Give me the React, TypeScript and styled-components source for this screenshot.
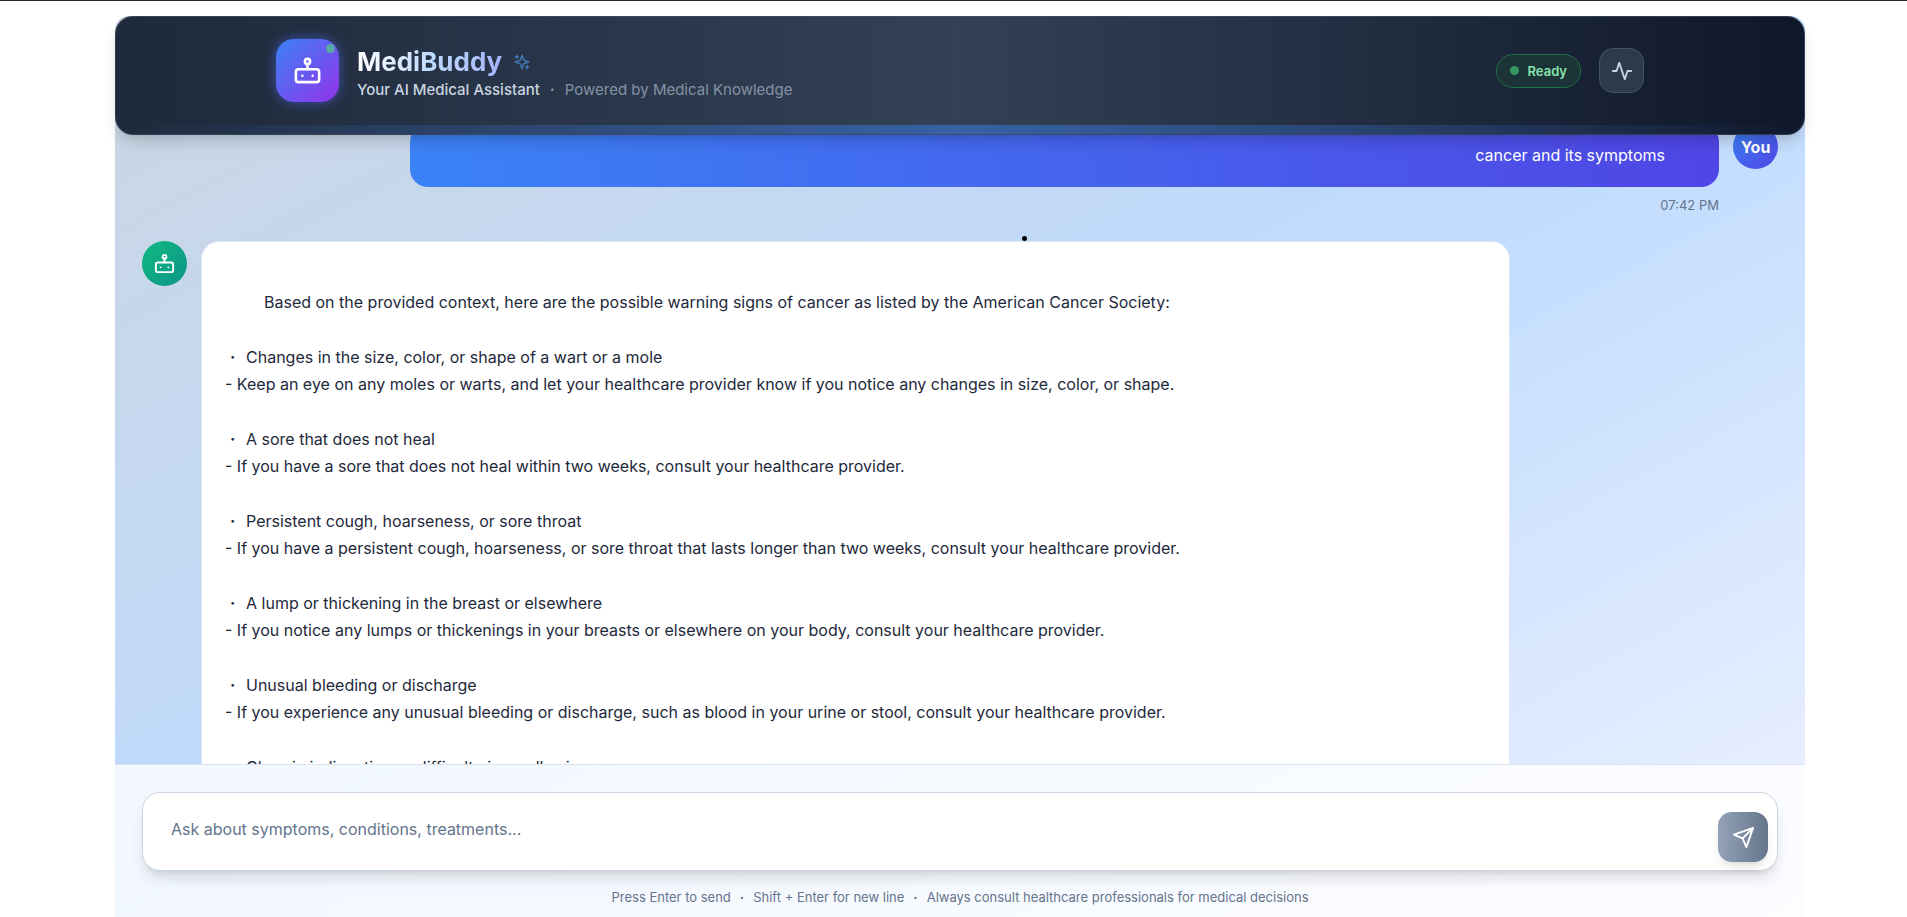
import React, { useState } from 'react';
import styled, { createGlobalStyle } from 'styled-components';

const GlobalStyle = createGlobalStyle`
  *, *::before, *::after { box-sizing: border-box; }
  body {
    margin: 0;
    background: #fff;
    color: #0f172a;
    font-family: Inter, "Noto Sans", sans-serif;
    font-size: 16px;
  }
  p, h1, ul { margin: 0; padding: 0; }
`;

const Page = styled.div`
  height: 100vh;
  display: flex;
  border-top: 1px solid #2b2a33;
  padding: 15px 102px 0 115px;
  overflow: hidden;
`;

const Shell = styled.div`
  flex: 1;
  min-width: 0;
  display: flex;
  flex-direction: column;
  border-radius: 14px 14px 0 0;
  background: linear-gradient(to bottom right, #cbd5e1, #bfdbfe, #eef2ff);
`;

const Header = styled.header`
  position: relative;
  z-index: 1;
  flex: none;
  padding: 17px 22px 27px;
  border: 1px solid rgba(71, 85, 105, 0.6);
  border-radius: 18px;
  background: linear-gradient(to right, #1e293b, #334155, #0f172a);
  box-shadow: 0 10px 15px -3px rgba(0, 0, 0, 0.15), 0 4px 6px -4px rgba(0, 0, 0, 0.1);

  &::after {
    content: '';
    position: absolute;
    left: 0;
    right: 0;
    bottom: 0;
    height: 9px;
    border-radius: 0 0 17px 17px;
    background: linear-gradient(to right, rgba(59, 130, 246, 0), rgba(59, 130, 246, 0.5), rgba(59, 130, 246, 0));
  }
`;

const HeaderInner = styled.div`
  max-width: 1368px;
  height: 73px;
  margin: 0 auto;
  display: flex;
  align-items: center;
  justify-content: space-between;
`;

const Cluster = styled.div`
  display: flex;
  align-items: center;
  gap: 18px;
`;

const Logo = styled.div`
  position: relative;
  width: 63px;
  height: 63px;
  display: grid;
  place-items: center;
  border-radius: 18px;
  color: #fff;
  background: linear-gradient(135deg, #3b82f6, #9333ea);
  box-shadow: 0 0 12px rgba(79, 110, 246, 0.6);
`;

const LogoStatus = styled.span`
  position: absolute;
  top: 5px;
  right: 4px;
  width: 9px;
  height: 9px;
  border-radius: 50%;
  background: #58a8a4;
`;

const Brand = styled.div`
  padding-top: 6px;
`;

const TitleRow = styled.div`
  display: flex;
  align-items: center;
  gap: 11px;
  color: #4275b5;
`;

const Title = styled.h1`
  font-size: 26px;
  line-height: 32px;
  font-weight: 700;
  color: transparent;
  background: linear-gradient(to right, #fff, #bfdbfe, #a5b4fc);
  background-clip: text;
  -webkit-background-clip: text;
`;

const Tagline = styled.p`
  display: flex;
  gap: 10px;
  font-size: 15px;
  line-height: 23px;
  color: #8492a6;

  strong {
    font-weight: 500;
    color: #cbd5e1;
  }
`;

const Separator = styled.span`
  font-weight: 700;
`;

const StatusPill = styled.div`
  height: 34px;
  padding: 0 13px;
  display: flex;
  align-items: center;
  gap: 9px;
  border: 1px solid #1f7043;
  border-radius: 17px;
  background: #1c3437;
  color: #86e5ab;
  font-size: 13px;
  font-weight: 600;

  &::before {
    content: '';
    width: 9px;
    height: 9px;
    border-radius: 50%;
    background: #369660;
  }
`;

const IconButton = styled.button`
  width: 45px;
  height: 45px;
  padding: 0;
  display: grid;
  place-items: center;
  border: 1px solid #445064;
  border-radius: 14px;
  background: #2e3a4c;
  color: #cbd5e1;
`;

const Messages = styled.main`
  flex: 1;
  min-height: 0;
  margin-top: -24px;
  padding: 13px 27px 0;
  display: flex;
  flex-direction: column;
  gap: 26px;
  overflow-y: auto;
  scrollbar-width: none;
`;

const Message = styled.article<{ $own?: boolean }>`
  position: relative;
  flex: none;
  display: flex;
  flex-direction: ${(p) => (p.$own ? 'row-reverse' : 'row')};
  align-items: flex-start;
  gap: 14px;
`;

const Avatar = styled.div<{ $own?: boolean }>`
  flex: none;
  width: 45px;
  height: 45px;
  display: grid;
  place-items: center;
  border-radius: 50%;
  color: #fff;
  font-weight: 700;
  background: ${(p) =>
    p.$own ? 'linear-gradient(135deg, #3b82f6, #4f46e5)' : 'linear-gradient(135deg, #10b981, #0d9488)'};
`;

const Column = styled.div`
  width: 80%;
`;

const UserBubble = styled.p`
  padding: 18px 54px 18px 24px;
  border-radius: 18px;
  background: linear-gradient(to right, #3b82f6, #4f46e5);
  color: #fff;
  line-height: 27px;
  text-align: right;
`;

const Time = styled.time`
  display: block;
  margin-top: 8px;
  font-size: 13px;
  line-height: 20px;
  text-align: right;
  color: #64748b;
`;

const BotBubble = styled.div`
  padding: 47px 23px 20px;
  border: 1px solid #dfe7f2;
  border-radius: 18px;
  background: #fff;
  color: #1e293b;
  line-height: 27px;
`;

const Intro = styled.p`
  padding-left: 39px;
`;

const SignList = styled.ul`
  list-style: none;

  li { margin-top: 28px; }
`;

const Sign = styled.p`
  display: flex;
  padding-left: 5px;

  &::before {
    content: '·';
    width: 16px;
    font-weight: 700;
  }
`;

const StrayDot = styled.span`
  position: absolute;
  top: -5px;
  left: calc(50% + 62px);
  width: 5px;
  height: 5px;
  border-radius: 50%;
  background: #000;
`;

const Composer = styled.footer`
  flex: none;
  padding: 27px 27px 10px;
  border-top: 1px solid #dbe5f1;
  background: rgba(255, 255, 255, 0.8);
`;

const InputBox = styled.form`
  height: 79px;
  padding: 0 9px 8px 28px;
  display: flex;
  align-items: flex-end;
  border: 1px solid #cbd5e1;
  border-radius: 18px;
  background: #fff;
  box-shadow: 0 10px 15px -3px rgba(0, 0, 0, 0.12), 0 4px 6px -4px rgba(0, 0, 0, 0.12);
`;

const Field = styled.textarea`
  flex: 1;
  height: 46px;
  padding: 0;
  border: 0;
  outline: 0;
  resize: none;
  background: transparent;
  font: inherit;
  line-height: 27px;
  color: #1e293b;

  &::placeholder { color: #64748b; opacity: 1; }
`;

const SendButton = styled.button`
  width: 50px;
  height: 50px;
  padding: 0;
  display: grid;
  place-items: center;
  border: 0;
  border-radius: 14px;
  background: linear-gradient(to right, #94a3b8, #64748b);
  box-shadow: 0 8px 12px -3px rgba(0, 0, 0, 0.1), 0 3px 5px -3px rgba(0, 0, 0, 0.1);
  color: #fff;
`;

const Hints = styled.p`
  margin-top: 16px;
  display: flex;
  flex-wrap: wrap;
  justify-content: center;
  gap: 0 9px;
  font-size: 13px;
  line-height: 20px;
  color: #64748b;
`;

type IconProps = { size: number; children: React.ReactNode };

const Icon = ({ size, children }: IconProps) => (
  <svg
    width={size}
    height={size}
    viewBox="0 0 24 24"
    fill="none"
    stroke="currentColor"
    strokeWidth="2"
    strokeLinecap="round"
    strokeLinejoin="round"
    aria-hidden="true"
  >
    {children}
  </svg>
);

const BotIcon = ({ size }: { size: number }) => (
  <Icon size={size}>
    <rect x="3" y="11" width="18" height="10" rx="2" />
    <circle cx="12" cy="5" r="2" />
    <path d="M12 7v4M8 16h.01M16 16h.01" />
  </Icon>
);

const signs = [
  ['Changes in the size, color, or shape of a wart or a mole', 'Keep an eye on any moles or warts, and let your healthcare provider know if you notice any changes in size, color, or shape.'],
  ['A sore that does not heal', 'If you have a sore that does not heal within two weeks, consult your healthcare provider.'],
  ['Persistent cough, hoarseness, or sore throat', 'If you have a persistent cough, hoarseness, or sore throat that lasts longer than two weeks, consult your healthcare provider.'],
  ['A lump or thickening in the breast or elsewhere', 'If you notice any lumps or thickenings in your breasts or elsewhere on your body, consult your healthcare provider.'],
  ['Unusual bleeding or discharge', 'If you experience any unusual bleeding or discharge, such as blood in your urine or stool, consult your healthcare provider.'],
  ['Chronic indigestion or difficulty in swallowing', ''],
];

export default function App() {
  const [draft, setDraft] = useState('');

  return (
    <>
      <GlobalStyle />
      <Page>
        <Shell>
          <Header>
            <HeaderInner>
              <Cluster>
                <Logo>
                  <BotIcon size={31} />
                  <LogoStatus />
                </Logo>
                <Brand>
                  <TitleRow>
                    <Title>MediBuddy</Title>
                    <Icon size={18}>
                      <path d="m12 3-1.9 5.8a2 2 0 0 1-1.3 1.3L3 12l5.8 1.9a2 2 0 0 1 1.3 1.3L12 21l1.9-5.8a2 2 0 0 1 1.3-1.3L21 12l-5.8-1.9a2 2 0 0 1-1.3-1.3L12 3Z" />
                      <path d="M5 3v4M19 17v4M3 5h4M17 19h4" />
                    </Icon>
                  </TitleRow>
                  <Tagline>
                    <strong>Your AI Medical Assistant</strong>
                    <Separator>·</Separator>
                    <span>Powered by Medical Knowledge</span>
                  </Tagline>
                </Brand>
              </Cluster>
              <Cluster>
                <StatusPill>Ready</StatusPill>
                <IconButton type="button" aria-label="Activity">
                  <Icon size={22}>
                    <path d="M22 12h-4l-3 9L9 3l-3 9H2" />
                  </Icon>
                </IconButton>
              </Cluster>
            </HeaderInner>
          </Header>

          <Messages>
            <Message $own>
              <Avatar $own>You</Avatar>
              <Column>
                <UserBubble>cancer and its symptoms</UserBubble>
                <Time>07:42 PM</Time>
              </Column>
            </Message>
            <Message>
              <Avatar>
                <BotIcon size={23} />
              </Avatar>
              <Column>
                <BotBubble>
                  <Intro>
                    Based on the provided context, here are the possible warning signs of cancer as listed by the American Cancer Society:
                  </Intro>
                  <SignList>
                    {signs.map(([sign, advice]) => (
                      <li key={sign}>
                        <Sign>{sign}</Sign>
                        {advice && <p>- {advice}</p>}
                      </li>
                    ))}
                  </SignList>
                </BotBubble>
              </Column>
              <StrayDot />
            </Message>
          </Messages>

          <Composer>
            <InputBox onSubmit={(e) => e.preventDefault()}>
              <Field
                aria-label="Message"
                placeholder="Ask about symptoms, conditions, treatments..."
                value={draft}
                onChange={(e) => setDraft(e.target.value)}
              />
              <SendButton type="submit" aria-label="Send">
                <Icon size={23}>
                  <path d="M22 2 11 13M22 2l-7 20-4-9-9-4 20-7Z" />
                </Icon>
              </SendButton>
            </InputBox>
            <Hints>
              <span>Press Enter to send</span>
              <Separator>·</Separator>
              <span>Shift + Enter for new line</span>
              <Separator>·</Separator>
              <span>Always consult healthcare professionals for medical decisions</span>
            </Hints>
          </Composer>
        </Shell>
      </Page>
    </>
  );
}
